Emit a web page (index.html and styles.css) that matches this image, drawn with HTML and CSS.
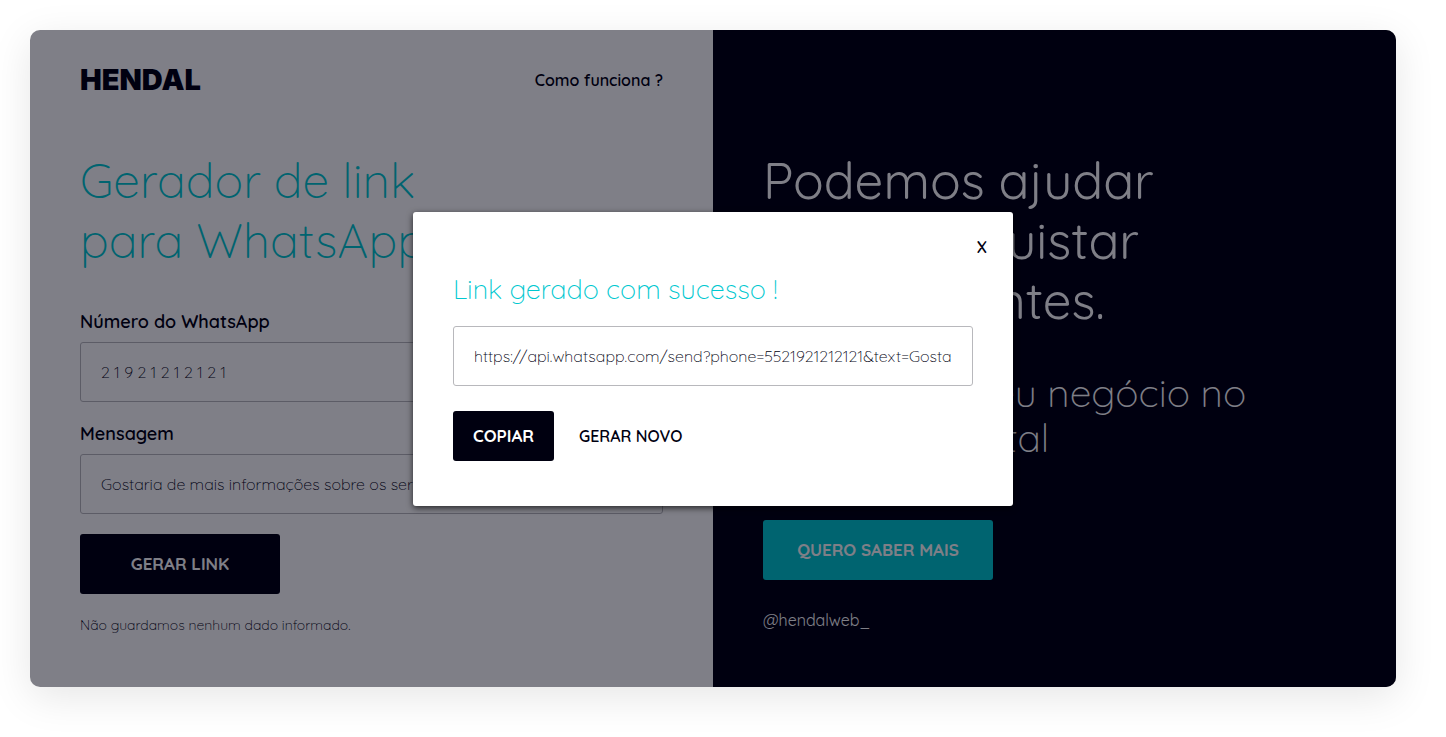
FILE: index.html
```html
<!DOCTYPE html>
<html lang="pt-BR">
<head>
<meta charset="utf-8">
<meta name="viewport" content="width=device-width, initial-scale=1">
<title>Gerador de link para WhatsApp</title>
<link rel="stylesheet" href="styles.css">
</head>
<body>
<main class="card">
  <section class="panel">
    <header class="header">
      <a class="logo" href="#">HENDAL</a>
      <a class="help" href="#">Como funciona ?</a>
    </header>
    <h1 class="title">Gerador de link<br>para WhatsApp</h1>
    <form class="form">
      <div class="field">
        <label class="label" for="phone">Número do WhatsApp</label>
        <input class="input" id="phone" type="text" value="2 1 9 2 1 2 1 2 1 2 1">
      </div>
      <div class="field">
        <label class="label" for="message">Mensagem</label>
        <input class="input" id="message" type="text" value="Gostaria de mais informações sobre os serviços">
      </div>
      <button class="button button-form" type="button">GERAR LINK</button>
    </form>
    <p class="note">Não guardamos nenhum dado informado.</p>
  </section>
  <section class="panel promo">
    <h2 class="promo-title">Podemos ajudar<br>você conquistar<br>novos clientes.</h2>
    <p class="promo-text">Posicione o seu negócio no<br>ambiente digital</p>
    <a class="button button-promo" href="#">QUERO SABER MAIS</a>
    <a class="social" href="#">@hendalweb_</a>
  </section>
  <div class="overlay">
    <div class="modal" role="dialog" aria-modal="true" aria-labelledby="modal-title">
      <button class="close" type="button" aria-label="Fechar">X</button>
      <h2 class="modal-title" id="modal-title">Link gerado com sucesso !</h2>
      <input class="input" type="text" readonly aria-label="Link gerado" value="https://api.whatsapp.com/send?phone=5521921212121&amp;text=Gostaria de mais informações">
      <div class="actions">
        <button class="button button-copy" type="button">COPIAR</button>
        <button class="renew" type="button">GERAR NOVO</button>
      </div>
    </div>
  </div>
</main>
</body>
</html>
```
FILE: styles.css
```css
* { box-sizing: border-box; }
body {
  margin: 0;
  padding: 30px 50px 50px 30px;
  background: #fff;
  color: #000010;
  font-family: Quicksand, Inter, sans-serif;
  font-size: 16px;
  line-height: 20px;
}
h1, h2, p { margin: 0; font-weight: 300; }
a { color: inherit; text-decoration: none; }
button, input { font: inherit; color: inherit; }
.card {
  position: relative;
  display: grid;
  grid-template-columns: 1fr 1fr;
  min-height: calc(100vh - 80px);
  border-radius: 10px;
  overflow: hidden;
  box-shadow: 0 10px 40px rgba(0, 0, 0, 0.1);
}
.panel { padding: 30px 50px; }
.header {
  display: flex;
  align-items: center;
  justify-content: space-between;
  height: 40px;
}
.logo { font-family: Inter, sans-serif; font-size: 29px; font-weight: 900; }
.help { font-weight: 600; }
.title {
  margin-top: 50px;
  color: #00c8d0;
  font-size: 48px;
  line-height: 60px;
}
.form { margin-top: 42px; }
.field { display: grid; gap: 10px; }
.field + .field { margin-top: 22px; }
.label { font-size: 18px; font-weight: 600; }
.input {
  width: 100%;
  height: 60px;
  padding: 0 20px;
  border: 1px solid #b8b8bc;
  border-radius: 3px;
  background: transparent;
  font-weight: 300;
  outline: none;
}
.button {
  display: flex;
  align-items: center;
  justify-content: center;
  height: 60px;
  border: 0;
  border-radius: 3px;
  background: #000010;
  color: #fff;
  font-size: 17px;
  font-weight: 700;
  cursor: pointer;
}
.button-form { width: 200px; margin-top: 20px; }
.note { margin-top: 20px; font-size: 14px; line-height: 22px; }
.promo { padding-top: 120px; background: #000010; color: #fff; }
.promo-title { font-size: 51px; font-weight: 400; line-height: 60px; }
.promo-text { margin-top: 40px; font-size: 39px; line-height: 45px; }
.button-promo { width: 230px; margin-top: 60px; background: #00c8d0; }
.social { display: block; margin-top: 30px; font-weight: 400; }
.overlay {
  position: absolute;
  inset: 0;
  display: flex;
  align-items: center;
  justify-content: center;
  background: rgba(0, 0, 16, 0.5);
}
.modal {
  display: flex;
  flex-direction: column;
  width: 600px;
  max-width: 100%;
  padding: 25px 40px 45px;
  border-radius: 3px;
  background: #fff;
  box-shadow: 0 2px 6px rgba(0, 0, 0, 0.7);
}
.close {
  align-self: flex-end;
  margin-right: -20px;
  padding: 0 6px;
  border: 0;
  background: none;
  font-weight: 600;
  cursor: pointer;
}
.modal-title {
  margin: 14px 0 19px;
  color: #00c8d0;
  font-size: 27px;
  line-height: 36px;
}
.actions { display: flex; gap: 25px; margin-top: 25px; }
.button-copy { height: 50px; padding: 0 20px; }
.renew { padding: 0; border: 0; background: none; font-weight: 600; cursor: pointer; }
```
